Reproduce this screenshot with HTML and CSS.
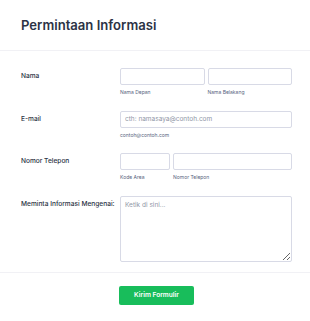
FILE: index.html
```html
<!DOCTYPE html>
<html lang="id">
<head>
    <meta charset="UTF-8">
    <meta name="viewport" content="width=device-width, initial-scale=1.0">
    <title>Permintaan Informasi</title>
    <link rel="stylesheet" href="styles.css">
</head>
<body>
    <div class="form-header">
        <h1>Permintaan Informasi</h1>
    </div>

    <form class="form-body">
        <div class="form-row">
            <label class="form-label">Nama</label>
            <div class="form-field split">
                <div class="sub-field">
                    <input type="text">
                    <span class="sublabel">Nama Depan</span>
                </div>
                <div class="sub-field">
                    <input type="text">
                    <span class="sublabel">Nama Belakang</span>
                </div>
            </div>
        </div>

        <div class="form-row">
            <label class="form-label">E-mail</label>
            <div class="form-field">
                <div class="sub-field">
                    <input type="text" placeholder="cth: namasaya@contoh.com">
                    <span class="sublabel">contoh@contoh.com</span>
                </div>
            </div>
        </div>

        <div class="form-row">
            <label class="form-label">Nomor Telepon</label>
            <div class="form-field split">
                <div class="sub-field area">
                    <input type="text">
                    <span class="sublabel">Kode Area</span>
                </div>
                <div class="sub-field">
                    <input type="text">
                    <span class="sublabel">Nomor Telepon</span>
                </div>
            </div>
        </div>

        <div class="form-row last">
            <label class="form-label">Meminta Informasi Mengenai:</label>
            <div class="form-field">
                <textarea placeholder="Ketik di sini..."></textarea>
            </div>
        </div>

        <div class="form-footer">
            <button type="submit">Kirim Formulir</button>
        </div>
    </form>
</body>
</html>
```

FILE: styles.css
```css
body {
    margin: 0;
    background-color: #ffffff;
    font-family: Inter, "Noto Sans", sans-serif;
    color: #2c3345;
}

.form-header {
    box-sizing: border-box;
    height: 51px;
    padding: 0 21px;
    display: flex;
    align-items: center;
    border-bottom: 1px solid #f1f1f5;
}

h1 {
    margin: 0;
    font-size: 13.1px;
    font-weight: 600;
    color: #2c3345;
}

.form-body {
    padding-top: 17px;
}

.form-row {
    display: flex;
    padding-left: 21px;
    margin-bottom: 14.5px;
}

.form-row.last {
    margin-bottom: 10px;
}

.form-label {
    width: 99px;
    flex-shrink: 0;
    font-size: 6.6px;
    font-weight: 500;
    line-height: 17px;
    white-space: nowrap;
}

.form-field {
    width: 172px;
    display: flex;
}

.form-field.split {
    gap: 3px;
}

.sub-field {
    flex: 1;
    display: flex;
    flex-direction: column;
}

.sub-field.area {
    flex: 0 0 50px;
}

input, textarea {
    box-sizing: border-box;
    width: 100%;
    height: 17px;
    margin: 0;
    padding: 0 4px;
    border: 1px solid #d8dae6;
    border-radius: 2px;
    font-family: Inter, "Noto Sans", sans-serif;
    font-size: 6.5px;
    color: #2c3345;
    background-color: #ffffff;
}

input::placeholder, textarea::placeholder {
    color: #8f96a6;
}

textarea {
    height: 66px;
    padding: 4px 4px;
    resize: vertical;
}

.sublabel {
    margin-top: 3px;
    font-size: 5px;
    line-height: 8px;
    color: #57647e;
}

.form-footer {
    display: flex;
    justify-content: center;
    padding: 13px 0 0 3px;
    border-top: 1px solid #f1f1f5;
}

button {
    width: 75px;
    height: 19px;
    border: none;
    border-radius: 2px;
    background-color: #18bd5b;
    color: #ffffff;
    font-family: Inter, "Noto Sans", sans-serif;
    font-size: 6.6px;
    font-weight: 600;
    cursor: pointer;
}
```
